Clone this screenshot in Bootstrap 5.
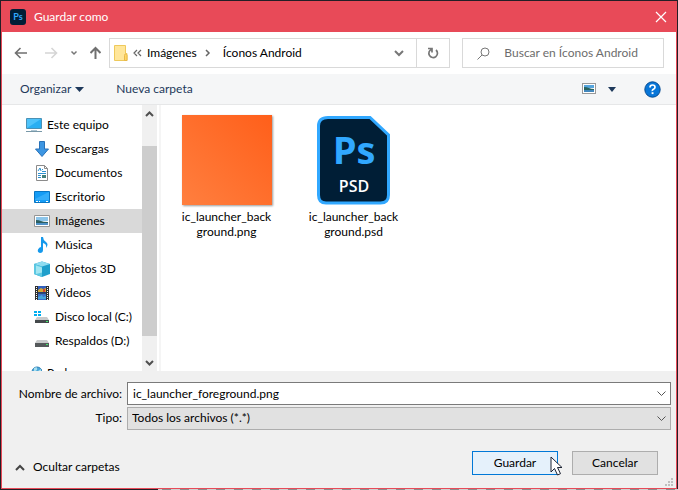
<!DOCTYPE html>
<html lang="es">
<head>
<meta charset="utf-8">
<meta name="viewport" content="width=device-width, initial-scale=1">
<title>Guardar como</title>
<link href="https://cdn.jsdelivr.net/npm/bootstrap@5.3.0/dist/css/bootstrap.min.css" rel="stylesheet">
<style>
body { font: 12px/16px Lato, "Open Sans", sans-serif; color: #000; background: #231f26; }
svg { display: block; flex: none; }
button, input, select { font: inherit; color: inherit; border-radius: 0; }
button { padding: 0; border: 0; background: none; display: flex; align-items: center; justify-content: center; }
.frame { padding: 1px 1px 1px 0; background: linear-gradient(90deg, #231f26 158px, transparent 158px) bottom / 100% 1px no-repeat, repeating-linear-gradient(90deg, #8c8c8c 0 9px, #d0d0d0 9px 18px) bottom / 100% 1px no-repeat, #231f26; }
.dialog { border: 1px solid #e84a58; border-top: 0; margin-left: 1px; background: #fff; }
.titlebar { height: 31px; background: #e84a58; color: #fff; padding: 0 9px 0 8px; }
.navrow { height: 42px; padding: 0 12px; }
.box { height: 30px; border: 1px solid #d9d9d9; }
.address { flex: 336 1 0; min-width: 0; }
.search { flex: 186 1 0; min-width: 0; margin-left: 12px; padding-left: 14px; }
.search input { border: 0; outline: 0; color: #6d6d6d; min-width: 0; padding: 0; margin-left: 14px; }
.search input::placeholder { color: #6d6d6d; opacity: 1; }
.refresh { width: 33px; height: 28px; border-left: 1px solid #d9d9d9; }
.tools { height: 31px; background: #f5f6f7; border-bottom: 1px solid #e6e7e8; color: #1e395b; padding: 0 15px 0 18px; }
.browser { min-height: 0; }
.side { width: 140px; padding-top: 8px; }
.side a { display: flex; align-items: center; gap: 5px; height: 24px; padding-left: 32px; color: #000; text-decoration: none; white-space: nowrap; }
.side a.top-level { padding-left: 24px; }
.side a.active { background: #d9d9d9; }
.side .network { margin-top: 8px; }
.scroll { width: 15px; background: #f0f0f0; }
.scroll button { height: 17px; width: 15px; }
.thumb { background: #cdcdcd; height: 190px; margin-top: 24px; }
.files { border-left: 2px solid #f5f5f5; margin-left: 2px; padding: 10px 10px 0 2px; }
.file { width: 127px; line-height: 15px; text-align: center; color: #000; text-decoration: none; }
.preview { width: 90px; height: 90px; margin: 0 auto 4px; }
.orange { background: linear-gradient(45deg, #ff7f3f, #ff5f1a); box-shadow: 1px 1px 2px #0006; }
.foot { background: #f0f0f0; padding: 11px 5px 0 2px; height: 117px; }
.foot label { width: 123px; padding-right: 5px; text-align: right; white-space: nowrap; }
.combo { height: 23px; background: #fff; border: 1px solid #7a7a7a; min-width: 0; }
.combo input, .combo select { border: 0; outline: 0; background: none; width: 100%; min-width: 0; height: 21px; padding: 0 0 1px 5px; appearance: none; }
.combo select { padding-left: 4px; }
.combo button { width: 17px; }
.combo.grey { background: #e1e1e1; border-color: #adadad; margin-top: 2px; }
.actions { padding: 21px 13px 0 11px; }
.act { width: 86px; height: 24px; background: #e1e1e1; border: 1px solid #adadad; }
.act.main { background: #e5f1fb; border-color: #0078d7; }
.cancel { margin-left: 14px; }
.pointer { left: 78px; top: 5px; }
.grip { right: 3px; bottom: 2px; }
</style>
<script src="https://cdn.jsdelivr.net/npm/bootstrap@5.3.0/dist/js/bootstrap.bundle.min.js"></script>
</head>
<body>
<div class="frame vh-100 d-flex">
<main class="dialog flex-grow-1 d-flex flex-column position-relative overflow-hidden">
  <header class="titlebar flex-shrink-0 d-flex align-items-center">
    <svg width="16" height="16" viewBox="0 0 16 16"><rect width="16" height="16" rx="3" fill="#001e36"/><text x="8" y="11" text-anchor="middle" font-size="9" font-weight="700" fill="#31a8ff">Ps</text></svg>
    <span class="ms-1 ps-1">Guardar como</span>
    <button class="ms-auto" aria-label="Cerrar"><svg width="12" height="12" viewBox="0 0 12 12"><path d="M1 1l10 10M11 1L1 11" stroke="#fff" stroke-width="1.2"/></svg></button>
  </header>

  <nav class="navrow flex-shrink-0 d-flex align-items-center">
    <button aria-label="Atrás"><svg width="14" height="12" viewBox="0 0 14 12"><path d="M13 6H2M6.500 1L1.500 6l5 5" fill="none" stroke="#707070" stroke-width="1.6"/></svg></button>
    <button class="ms-3" aria-label="Adelante"><svg width="14" height="12" viewBox="0 0 14 12"><path d="M1 6h11M7.500 1l5 5-5 5" fill="none" stroke="#d5d5d5" stroke-width="1.6"/></svg></button>
    <button class="ms-2 px-1" aria-label="Recientes"><svg width="8" height="6" viewBox="0 0 8 6"><path d="M1.500 1.500L4 4l2.500-2.500" fill="none" stroke="#777" stroke-width="1.5"/></svg></button>
    <button class="ms-1 ps-1 me-2" aria-label="Subir"><svg width="11" height="14" viewBox="1 0 11 14"><path d="M6.500 13V2M1.500 7l5-5 5 5" fill="none" stroke="#707070" stroke-width="2"/></svg></button>
    <div class="box address d-flex align-items-center ps-1">
      <svg width="14" height="18" viewBox="0 0 14 18"><path d="M.5 1.500h11v8h1.500v7H.5z" fill="#ffe69a" stroke="#eec95b"/><path d="M10.500 16.500v-5q0-1.500 1-1.500t1.500 1.500v5z" fill="#ffd766" stroke="#e8b84a"/></svg>
      <svg class="ms-1" width="11" height="8" viewBox="0 0 11 8"><path d="M5 1L2 4l3 3M9 1L6 4l3 3" fill="none" stroke="#666" stroke-width="1.200"/></svg>
      <span class="ms-1">Imágenes</span>
      <svg class="ms-2" width="6" height="8" viewBox="0 0 6 8"><path d="M1 1l3 3-3 3" fill="none" stroke="#666" stroke-width="1.500"/></svg>
      <span class="ms-2 ps-1 text-nowrap">Íconos Android</span>
      <button class="ms-auto me-2 pe-1" aria-label="Ubicaciones"><svg width="10" height="7" viewBox="0 0 10 7"><path d="M1 1l4 4 4-4" fill="none" stroke="#777" stroke-width="2"/></svg></button>
      <button class="refresh" aria-label="Actualizar"><svg width="12" height="14" viewBox="0 0 12 14"><path d="M9 4A4.300 4.300 0 1 1 4.700 3.200M1 2.500h4v4" fill="none" stroke="#777" stroke-width="1.700"/></svg></button>
    </div>
    <div class="box search d-flex align-items-center">
      <svg width="13" height="13" viewBox="0 0 13 13"><path d="M5 8L.5 12.500" stroke="#777" fill="none"/><circle cx="8" cy="5" r="4" stroke="#777" fill="none"/></svg>
      <input class="flex-grow-1" aria-label="Buscar" placeholder="Buscar en Íconos Android">
    </div>
  </nav>

  <div class="tools flex-shrink-0 d-flex align-items-center">
    <button>Organizar<svg class="ms-1" width="9" height="5" viewBox="0 0 9 5"><path d="M0 0h9L4.500 5z" fill="#1e395b"/></svg></button>
    <button class="ms-4 ps-2">Nueva carpeta</button>
    <button class="ms-auto" aria-label="Cambiar vista"><svg width="14" height="12" viewBox="0 0 14 12"><rect x=".5" y=".5" width="13" height="10" fill="#fff" stroke="#999"/><path d="M2 2h10v3H2z" fill="#55a4dc"/><path d="M2 4q3 0 5 1t5 1v2H2z" fill="#28635f"/><path d="M2 7h10v2H2z" fill="#4287bc"/></svg></button>
    <button class="ms-2 ps-1" aria-label="Más opciones"><svg width="8" height="5" viewBox="0 0 8 5"><path d="M0 0h8L4 5z" fill="#1e395b"/></svg></button>
    <button class="ms-4 ps-1" aria-label="Ayuda"><svg width="17" height="17" viewBox="0 0 17 17"><circle cx="8.500" cy="8.500" r="7.700" fill="#0876d8" stroke="#064b92"/><path d="M6 6.500Q6 4 8.500 4T11 6.200Q11 7.500 9.500 8.300T8.500 10" fill="none" stroke="#fff" stroke-width="1.700"/><path d="M7.600 11.200h1.900v1.900H7.600z" fill="#fff"/></svg></button>
  </div>

  <section class="browser d-flex flex-grow-1 overflow-hidden">
    <nav class="side flex-shrink-0">
      <a class="top-level" href="#"><svg width="16" height="16" viewBox="0 0 16 16"><path d="M.5 1.500h15v10H.5z" fill="#4ec3fa" stroke="#4a91b5"/><path d="M1 11L15 2v9z" fill="#29aff2"/><path d="M5 13h6v1H5z" fill="#afc6d3"/><path d="M0 14h16v1H0z" fill="#7898a8"/></svg>Este equipo</a>
      <a href="#"><svg width="16" height="16" viewBox="0 0 16 16"><path d="M5.500.5h5V8h4L8 15.500 1.500 8h4z" fill="#3d96e2" stroke="#2871b8"/></svg>Descargas</a>
      <a href="#"><svg width="16" height="16" viewBox="0 0 16 16"><path d="M2.500.5h8l3 3v12h-11z" fill="#fff" stroke="#8b8b8b"/><path d="M10.500.5v3h3" fill="none" stroke="#8b8b8b"/><path d="M4 6l2-3 1 3M8 4.500h1M8 6.500h4M4 8.500h8M4 10.500h3M4 12.500h3" stroke="#2d91d0" fill="none"/><path d="M8 10h4v3H8z" fill="#44807b"/></svg>Documentos</a>
      <a href="#"><svg width="16" height="16" viewBox="0 0 16 16"><path d="M.5 2.500h15v11H.5z" fill="#159cf5" stroke="#0875c3"/><path d="M1 10L15 3v8H1z" fill="#33adfa"/><path d="M2 12.500h2M5 12.500h1M12 12.500h2" stroke="#fff"/></svg>Escritorio</a>
      <a class="active" aria-current="page" href="#"><svg width="16" height="16" viewBox="0 0 16 16"><path d="M.5 2.500h15v11H.5z" fill="#fff" stroke="#959595"/><path d="M2 4h12v4H2z" fill="#8cc5ea"/><path d="M2 7q3 0 5 1t7 1v2H2z" fill="#2b5f62"/><path d="M2 10h12v2H2z" fill="#4f91c7"/></svg>Imágenes</a>
      <a href="#"><svg width="16" height="16" viewBox="0 0 16 16"><path d="M7 0h2q0 3 3 5t0 6q1-4-3-5v7q0 3-3 3-3-1-2-3.500T7 10z" fill="#1599ec"/></svg>Música</a>
      <a href="#"><svg width="16" height="16" viewBox="0 0 16 16"><path d="M0 3l8-2.500L16 3v10l-8 3-8-3z" fill="#1f9fcb"/><path d="M0 3l8-2.500L16 3 8 5.500z" fill="#8fdcf0"/><path d="M0 3l8 2.500V16l-8-3z" fill="#5cc8e2"/><path d="M2 4.500l6 2v5L2 13z" fill="#a2e6f2"/></svg>Objetos 3D</a>
      <a href="#"><svg width="16" height="16" viewBox="0 0 16 16"><path d="M1 1h14v14H1z" fill="#303030"/><path d="M4 1h8v7H4z" fill="#315fbd"/><path d="M4 5l3-2 2 1 3-1v4H4z" fill="#d2a634"/><path d="M9 4h2v3H9z" fill="#d74331"/><path d="M4 8h8v7H4z" fill="#3c70ca"/><path d="M4 12l4-2 1 2 3-1v3H4z" fill="#48a6db"/><path d="M4 8h8" stroke="#222"/><path d="M2.500 2v13M13.500 2v13" stroke="#fff" stroke-dasharray="1 1"/></svg>Videos</a>
      <a href="#"><svg width="16" height="16" viewBox="0 0 16 16"><path d="M0 2h3v2H0zM4 2h3v2H4zM0 5h3v2H0zM4 5h3v2H4z" fill="#00adef"/><path d="M3 8h10l2 3H1z" fill="#c8cacb"/><path d="M1 11h14v3H1z" fill="#45494c"/><path d="M12 12h2v1h-2z" fill="#41e96a"/></svg>Disco local (C:)</a>
      <a href="#"><svg width="16" height="16" viewBox="0 0 16 16"><path d="M3 7h10l2 3H1z" fill="#c8cacb"/><path d="M1 10h14v4H1z" fill="#55595b"/><path d="M12 11h2v1h-2z" fill="#41e96a"/></svg>Respaldos (D:)</a>
      <a class="top-level network" href="#"><svg width="16" height="16" viewBox="0 0 16 16"><circle cx="12" cy="7" r="5" transform="translate(-1 0)" fill="#4ca6d9" stroke="#2f81b6"/><path d="M8 3q4-2 3 2l-3 2zM12 6l3-2v5h-3z" fill="#a7dfef"/><path d="M1 10h7v5H1z" fill="#4ab5ed"/></svg>Red</a>
    </nav>
    <div class="scroll flex-shrink-0 d-flex flex-column">
      <button aria-label="Desplazar arriba"><svg width="9" height="6" viewBox="0 0 9 6"><path d="M1 5l3.500-3.500L8 5" fill="none" stroke="#505050" stroke-width="2"/></svg></button>
      <div class="thumb"></div>
      <button class="mt-auto" aria-label="Desplazar abajo"><svg width="9" height="6" viewBox="0 0 9 6"><path d="M1 1l3.500 3.500L8 1" fill="none" stroke="#505050" stroke-width="2"/></svg></button>
    </div>
    <div class="files flex-grow-1 d-flex align-items-start flex-wrap">
      <a class="file" href="#"><div class="preview orange"></div>ic_launcher_back<br>ground.png</a>
      <a class="file" href="#"><div class="preview"><svg width="90" height="90" viewBox="0 0 90 90"><path d="M19 2.500H61L79.500 20V80q0 8-8 8H17q-7.500 0-7.500-8V11q0-8.500 9.500-8.500z" fill="#001e36" stroke="#31a8ff" stroke-width="3"/><text x="45" y="49" text-anchor="middle" font-family="Open Sans, sans-serif" font-size="38" font-weight="700" fill="#31a8ff">Ps</text><text x="45" y="77" text-anchor="middle" font-family="Open Sans, sans-serif" font-size="16" font-weight="600" fill="#fff">PSD</text></svg></div>ic_launcher_back<br>ground.psd</a>
    </div>
  </section>

  <footer class="foot flex-shrink-0">
    <div class="d-flex align-items-center">
      <label for="name">Nombre de archivo:</label>
      <div class="combo d-flex flex-grow-1">
        <input id="name" value="ic_launcher_foreground.png">
        <button aria-label="Nombres anteriores"><svg width="9" height="6" viewBox="0 0 9 6"><path d="M.5.5l4 4 4-4" fill="none" stroke="#555"/></svg></button>
      </div>
    </div>
    <div class="d-flex align-items-center">
      <label for="kind">Tipo:</label>
      <div class="combo grey d-flex flex-grow-1 align-items-center pe-1">
        <select id="kind"><option>Todos los archivos (*.*)</option></select>
        <svg width="9" height="6" viewBox="0 0 9 6"><path d="M.5.5l4 4 4-4" fill="none" stroke="#555"/></svg>
      </div>
    </div>
    <div class="actions d-flex align-items-center">
      <button class="mt-2"><svg class="me-2" width="10" height="7" viewBox="0 0 10 7"><path d="M1 6l4-4 4 4" fill="none" stroke="#444" stroke-width="2"/></svg>Ocultar carpetas</button>
      <div class="ms-auto position-relative">
        <button class="act main">Guardar</button>
        <svg class="pointer position-absolute" width="14" height="21" viewBox="0 0 14 21"><path d="M1 1v15l3.500-3.500L7.500 19l3-1.300-3-6.200H12z" fill="#fff" stroke="#1c2333"/></svg>
      </div>
      <button class="act cancel">Cancelar</button>
    </div>
  </footer>
  <svg class="grip position-absolute" width="8" height="8" viewBox="0 0 8 8"><path d="M6 0h2v2H6zM3 3h2v2H3zM6 3h2v2H6zM0 6h2v2H0zM3 6h2v2H3zM6 6h2v2H6z" fill="#bfbfbf"/></svg>
</main>
</div>
</body>
</html>
